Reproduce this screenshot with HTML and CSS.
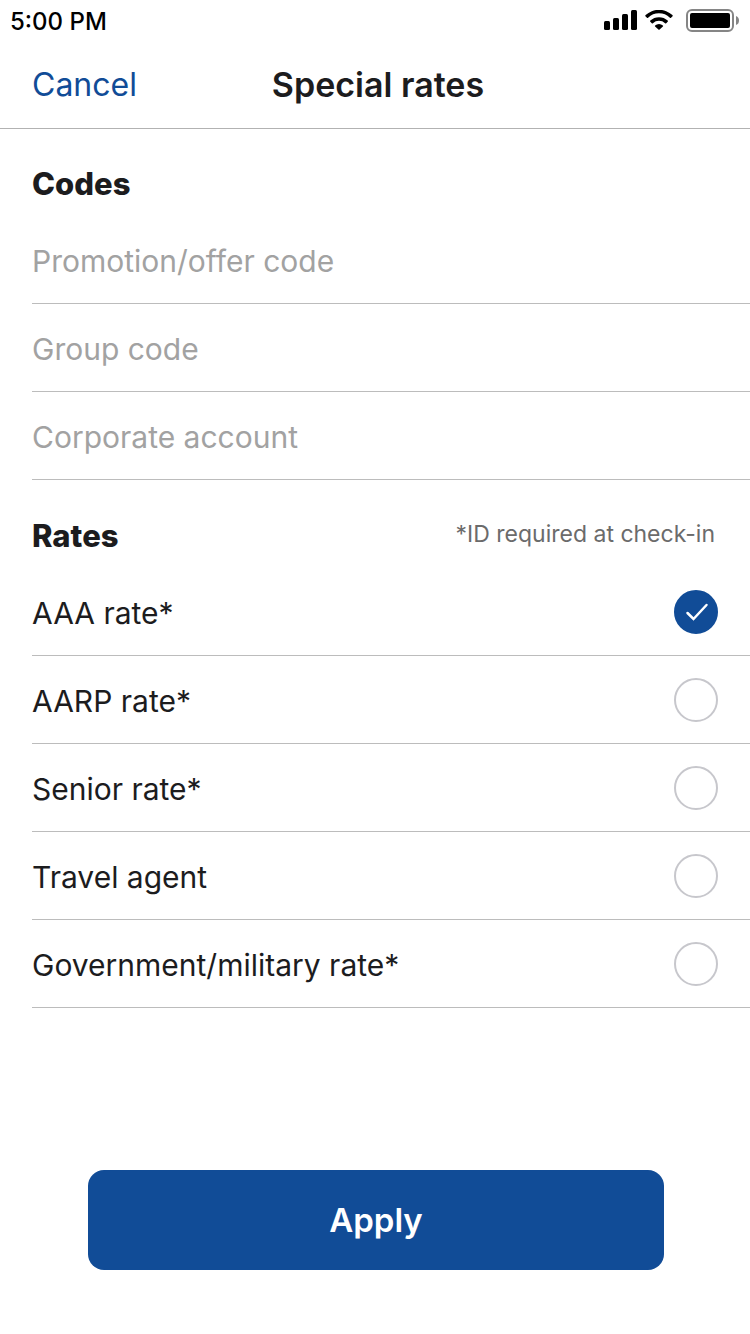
FILE: index.html
```html
<!DOCTYPE html>
<html lang="en">
<head>
    <meta charset="utf-8">
    <meta name="viewport" content="width=device-width">
    <title>Special rates</title>
    <link rel="stylesheet" href="styles.css">
</head>
<body>
<div class="status-bar">
    <span class="time">5:00 PM</span>
    <div class="status-icons">
        <svg width="33" height="20" viewBox="0 0 33 20">
            <rect x="0" y="11" width="6" height="9" rx="1.5"/>
            <rect x="9" y="8" width="6" height="12" rx="1.5"/>
            <rect x="18" y="4" width="6" height="16" rx="1.5"/>
            <rect x="27" y="0" width="6" height="20" rx="1.5"/>
        </svg>
        <svg width="28" height="20" viewBox="0 0 28 20">
            <path d="M0.6 5.1 A19.5 19.5 0 0 1 27.4 5.1 Q28 5.8 27.4 6.4 L26 7.8 Q25.5 8.2 24.9 7.7 A15.8 15.8 0 0 0 3.1 7.7 Q2.5 8.2 2 7.8 L0.6 6.4 Q0 5.8 0.6 5.1 Z"/>
            <path d="M5.3 10.6 A12.8 12.8 0 0 1 22.7 10.6 Q23.3 11.2 22.7 11.8 L21.2 13.3 Q20.7 13.7 20.1 13.2 A9 9 0 0 0 7.9 13.2 Q7.3 13.7 6.8 13.3 L5.3 11.8 Q4.7 11.2 5.3 10.6 Z"/>
            <path d="M10.1 15.5 A5.8 5.8 0 0 1 17.9 15.5 Q18.5 16 17.9 16.6 L14.6 19.6 Q14 20 13.4 19.6 L10.1 16.6 Q9.5 16 10.1 15.5 Z"/>
        </svg>
        <svg class="battery" width="53" height="24" viewBox="0 0 53 24">
            <rect x="1" y="2" width="46" height="21" rx="5" fill="none" stroke="#858585" stroke-width="2"/>
            <rect x="4" y="5" width="40" height="15" rx="2"/>
            <path d="M50 8 Q53 9 53 12.5 T50 17 Z" fill="#858585"/>
        </svg>
    </div>
</div>

<header class="nav">
    <button type="button" class="cancel">Cancel</button>
    <h1>Special rates</h1>
</header>

<form class="rates-form">
    <section>
        <div class="section-head">
            <h2>Codes</h2>
        </div>
        <input class="row code" type="text" aria-label="Promotion/offer code" placeholder="Promotion/offer code">
        <input class="row code" type="text" aria-label="Group code" placeholder="Group code">
        <input class="row code" type="text" aria-label="Corporate account" placeholder="Corporate account">
    </section>

    <section>
        <div class="section-head">
            <h2>Rates</h2>
            <p class="note">*ID required at check-in</p>
        </div>
        <label class="row rate"><span>AAA rate*</span><input type="radio" name="rate" value="aaa" checked></label>
        <label class="row rate"><span>AARP rate*</span><input type="radio" name="rate" value="aarp"></label>
        <label class="row rate"><span>Senior rate*</span><input type="radio" name="rate" value="senior"></label>
        <label class="row rate"><span>Travel agent</span><input type="radio" name="rate" value="agent"></label>
        <label class="row rate"><span>Government/military rate*</span><input type="radio" name="rate" value="government"></label>
    </section>

    <button type="submit" class="apply">Apply</button>
</form>
</body>
</html>
```
FILE: styles.css
```css
* {
    box-sizing: border-box;
}
body {
    margin: 0;
    min-height: 100vh;
    display: flex;
    flex-direction: column;
    background-color: #fff;
    color: #1c1c1e;
    font-family: Inter, "Liberation Sans", sans-serif;
    font-size: 30px;
}
h1, h2, p {
    margin: 0;
}
button, input {
    font: inherit;
}
.status-bar {
    display: flex;
    justify-content: space-between;
    align-items: center;
    height: 40px;
    padding: 0 11px 0 10px;
}
.time {
    padding-top: 3px;
    font-size: 24px;
    font-weight: 500;
    color: #000;
}
.status-icons {
    display: flex;
    align-items: center;
    gap: 8px;
}
.battery {
    margin-left: 5px;
}
.nav {
    display: grid;
    grid-template-columns: 1fr auto 1fr;
    align-items: center;
    height: 88px;
    padding: 0 26px 0 32px;
    box-shadow: 0 1px 0 #b2b2b2;
}
.nav h1 {
    font-size: 34px;
    font-weight: 600;
}
.cancel {
    justify-self: start;
    padding: 0;
    border: none;
    background: none;
    color: #114c97;
    font-size: 32px;
    cursor: pointer;
}
.rates-form {
    flex: 1;
    display: flex;
    flex-direction: column;
    padding-bottom: 64px;
}
section {
    padding-left: 32px;
}
.section-head {
    display: flex;
    justify-content: space-between;
    align-items: center;
    height: 88px;
    padding: 22px 35px 0 0;
}
h2 {
    font-size: 31px;
    font-weight: 800;
}
.note {
    padding-bottom: 2px;
    font-size: 23px;
    color: #6b6b6b;
}
.row {
    display: flex;
    justify-content: space-between;
    align-items: center;
    width: 100%;
    height: 88px;
    padding: 0 32px 0 0;
    border: none;
    border-bottom: 1px solid #bcbcbc;
    outline: none;
}
.code {
    padding-top: 2px;
}
.code::placeholder {
    color: #a2a2a2;
    opacity: 1;
}
.rate span {
    padding-top: 2px;
}
.rate input {
    appearance: none;
    width: 44px;
    height: 44px;
    margin: 0;
    border: 2px solid #c7c7cc;
    border-radius: 50%;
}
.rate input:checked {
    border-color: #114c97;
    background: #114c97 url("data:image/svg+xml,%3Csvg xmlns='http://www.w3.org/2000/svg' viewBox='0 0 44 44'%3E%3Cpath d='M13.5 23l6 6 13-14' fill='none' stroke='white' stroke-width='2.5' stroke-linecap='round'/%3E%3C/svg%3E") center / 44px 44px no-repeat;
}
.apply {
    margin: auto 86px 0 88px;
    height: 100px;
    border: none;
    border-radius: 16px;
    background-color: #114c97;
    color: #fff;
    font-size: 33px;
    font-weight: 600;
    cursor: pointer;
}
```
